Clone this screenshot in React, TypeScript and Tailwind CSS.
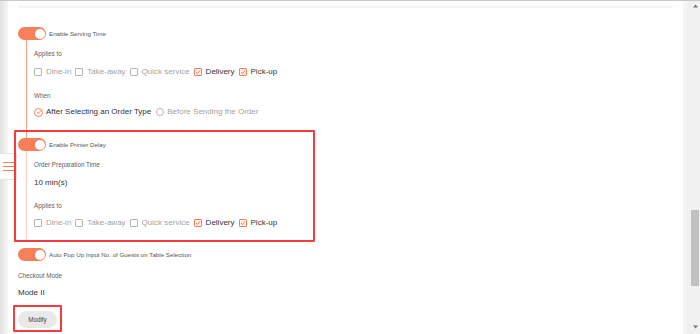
import React from 'react';

const Toggle: React.FC<{ label: string }> = ({ label }) => (
  <div className="relative z-[1] flex h-[13px] items-center gap-[3px]">
    <div className="flex h-[13px] w-[28px] items-center justify-end rounded-full bg-[#f5805a] pr-[1px]">
      <div className="h-[10px] w-[10px] rounded-full bg-white" />
    </div>
    <span className="text-[6.2px] text-[#555]">{label}</span>
  </div>
);

const Check: React.FC<{ label: string; checked?: boolean }> = ({ label, checked }) => (
  <div className="flex items-center gap-[4px]">
    {checked ? (
      <span className="flex h-[8px] w-[8px] items-center justify-center rounded-[1px] border border-[#f5805a] bg-[#fff2ec]">
        <svg width="6" height="6" viewBox="0 0 6 6">
          <path d="M1 3.2 L2.4 4.5 L5 1.6" fill="none" stroke="#f06a3f" strokeWidth="0.9" />
        </svg>
      </span>
    ) : (
      <span className="h-[8px] w-[8px] rounded-[1px] border border-[#b5b5b5] bg-white" />
    )}
    <span className={checked ? 'text-[8px] text-[#333]' : 'text-[8px] text-[#a3a3a3]'}>{label}</span>
  </div>
);

const TypeRow: React.FC = () => (
  <div className="flex h-[12px] items-center gap-[4px]">
    <Check label="Dine-in" />
    <Check label="Take-away" />
    <Check label="Quick service" />
    <Check label="Delivery" checked />
    <Check label="Pick-up" checked />
  </div>
);

const Label: React.FC<{ text: string; className?: string }> = ({ text, className }) => (
  <div className={`flex h-[10px] items-center text-[6.3px] text-[#606060] ${className ?? ''}`}>{text}</div>
);

const App: React.FC = () => {
  return (
    <div
      className="relative flex h-[334px] w-[700px] overflow-hidden border-t border-[#c9c9c9] bg-white"
      style={{ fontFamily: '"Liberation Sans", Arial, sans-serif' }}
    >
      {/* left sidebar edge */}
      <div className="w-[8px] bg-gradient-to-r from-[#e2e2e2] to-[#f6f6f6]" />

      {/* main content */}
      <div className="flex-1 pl-[10px]">
        <div className="mt-[5px] h-[2px] w-[654px] bg-[#f4f4f4]" />

        <div className="mt-[19px]">
          <Toggle label="Enable Serving Time" />
        </div>
        <div className="ml-[8px] border-l border-[#f7a285] pl-[7px] pt-[9px] pb-[20px]">
          <Label text="Applies to" />
          <div className="mt-[7px]">
            <TypeRow />
          </div>
          <Label text="When" className="mt-[13px]" />
          <div className="mt-[5px] flex h-[12px] items-center">
            <span className="flex h-[9px] w-[9px] items-center justify-center rounded-full border border-[#f5805a]">
              <svg width="6" height="6" viewBox="0 0 6 6">
                <path d="M1.2 3.1 L2.5 4.3 L4.9 1.7" fill="none" stroke="#f06a3f" strokeWidth="0.9" />
              </svg>
            </span>
            <span className="ml-[3px] text-[8px] text-[#333]">After Selecting an Order Type</span>
            <span className="ml-[5px] h-[8px] w-[8px] rounded-full border border-[#b5b5b5]" />
            <span className="ml-[3px] text-[8px] text-[#a3a3a3]">Before Sending the Order</span>
          </div>
        </div>

        <Toggle label="Enable Printer Delay" />
        <div className="ml-[8px] border-l border-[#fbcfbf] pl-[7px] pt-[9px] pb-[11px]">
          <Label text="Order Preparation Time" />
          <div className="mt-[7px] flex h-[12px] items-center text-[8px] text-[#333]">10 min(s)</div>
          <Label text="Applies to" className="mt-[12px]" />
          <div className="mt-[6px]">
            <TypeRow />
          </div>
        </div>

        <div className="mt-[8px]">
          <Toggle label="Auto Pop Up Input No. of Guests on Table Selection" />
        </div>
        <Label text="Checkout Mode" className="mt-[10px]" />
        <div className="mt-[6px] flex h-[12px] items-center text-[8px] text-[#333]">Mode II</div>
        <button className="mt-[12px] flex h-[17px] w-[39px] items-center justify-center rounded-full bg-[#e9e9e9] text-[6.3px] text-[#444]">
          Modify
        </button>
      </div>

      {/* right edge + scrollbar */}
      <div className="w-[7px] bg-gradient-to-r from-[#f7f7f7] to-[#efefef]" />
      <div className="flex w-[10px] flex-col items-center bg-[#f1f1f1]">
        <svg className="mt-[3px]" width="5" height="4" viewBox="0 0 5 4">
          <path d="M0 3.5 L2.5 0.5 L5 3.5 Z" fill="#777" />
        </svg>
        <div className="mt-[202px] h-[76px] w-[8px] bg-[#c1c1c1]" />
        <svg className="mt-[39px]" width="5" height="4" viewBox="0 0 5 4">
          <path d="M0 0.5 L2.5 3.5 L5 0.5 Z" fill="#777" />
        </svg>
      </div>

      {/* side menu tab */}
      <div className="absolute left-0 top-[152px] flex h-[27px] w-[17px] flex-col justify-center gap-[2.5px] border border-l-0 border-[#e4e4e4] bg-white pl-[3px]">
        <span className="h-[1.3px] w-[11px] bg-[#f5805a]" />
        <span className="h-[1.3px] w-[11px] bg-[#f5805a]" />
        <span className="h-[1.3px] w-[11px] bg-[#f5805a]" />
      </div>

      {/* annotation boxes */}
      <div className="absolute left-[14px] top-[129px] z-10 h-[112px] w-[301px] rounded-[1px] border-2 border-[#f53b3b]" />
      <div className="absolute left-[13px] top-[304px] z-10 h-[27px] w-[49px] rounded-[1px] border-2 border-[#f53b3b]" />
    </div>
  );
};

export default App;
